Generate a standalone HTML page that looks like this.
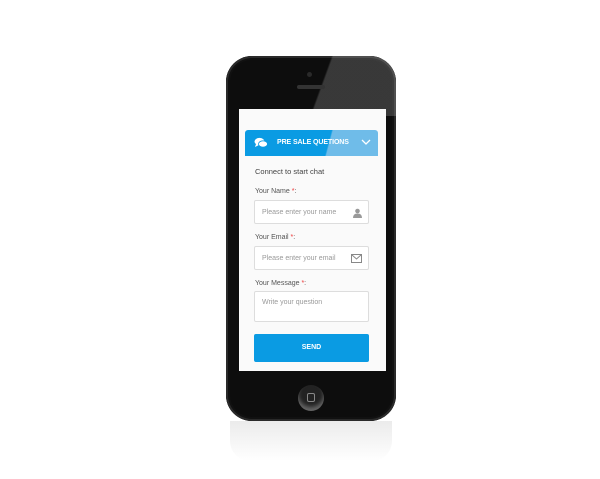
<!DOCTYPE html>
<html><head><style>
body{margin:0;width:600px;height:479px;background:#fff;position:relative;overflow:hidden;font-family:"Liberation Sans",sans-serif}
.phone{position:absolute;left:226px;top:56px;width:170px;height:365px;background:#0d0d0d;border-radius:26px;box-shadow:inset 0 0 0 2px #2a2a2a,inset 0 0 0 4px #111;overflow:hidden}
.shine{position:absolute;left:0;top:0;width:170px;height:60px;background:linear-gradient(110deg,transparent 55%,rgba(255,255,255,.18) 56%)}
.refl{position:absolute;left:230px;top:421px;width:162px;height:40px;background:linear-gradient(#e6e6e6,#fff);border-radius:0 0 20px 20px;opacity:.8}
.spk{position:absolute;left:297px;top:85px;width:28px;height:4px;background:#333;border-radius:3px}
.cam{position:absolute;left:307px;top:72px;width:5px;height:5px;background:#2a2a2a;border-radius:50%}
.screen{position:absolute;left:239px;top:109px;width:147px;height:262px;background:#fafafa}
.hdr{position:absolute;left:245px;top:130px;width:133px;height:26px;background:linear-gradient(105deg,#0a9be3 62%,#6fbce9 63%);border-radius:3px 3px 0 0}
.t{position:absolute;font-size:7px;color:#555}
.in{position:absolute;left:254px;width:115px;background:#fff;border:1px solid #ddd;border-radius:2px;box-sizing:border-box}
.ph{position:absolute;left:7px;font-size:7px;color:#999}
.btn{position:absolute;left:254px;top:334px;width:115px;height:28px;background:#0a9be3;border-radius:2px;color:#fff;font-size:7px;font-weight:bold;text-align:center;line-height:28px}
.home{position:absolute;left:298px;top:385px;width:26px;height:26px;border-radius:50%;background:#222;box-shadow:inset 0 -4px 4px #666}
.home i{position:absolute;left:9px;top:8px;width:6px;height:7px;border:1.5px solid #888;border-radius:2px}
r{color:#e33}
</style></head><body>
<div class="refl"></div>
<div class="phone"><div class="shine"></div></div>
<div class="cam"></div><div class="spk"></div>
<div class="screen"></div>
<div class="hdr"></div>
<svg style="position:absolute;left:254px;top:137px" width="14" height="12" viewBox="0 0 14 12"><ellipse cx="5.5" cy="4.5" rx="5" ry="3.6" fill="#fff"/><path d="M2 7 L1 10 L5 8z" fill="#fff"/><ellipse cx="9" cy="7" rx="4.5" ry="3.2" fill="#fff" stroke="#0a9be3" stroke-width=".8"/></svg>
<div style="position:absolute;left:277px;top:139px;color:#fff;font-size:7px;font-weight:bold;letter-spacing:-.1px">PRE SALE QUETIONS</div>
<svg style="position:absolute;left:361px;top:139px" width="10" height="7"><path d="M1 1 L5 5 L9 1" stroke="#fff" stroke-width="1.3" fill="none"/></svg>
<div class="t" style="left:255px;top:167px;font-size:7.5px;color:#444">Connect to start chat</div>
<div class="t" style="left:255px;top:188px">Your Name <r>*</r>:</div>
<div class="in" style="top:200px;height:24px"><span class="ph" style="top:8px">Please enter your name</span>
<svg style="position:absolute;right:6px;top:7px" width="9" height="10"><circle cx="4.5" cy="3" r="2.3" fill="#999"/><path d="M0 10 Q0 5.5 4.5 5.5 Q9 5.5 9 10z" fill="#999"/></svg></div>
<div class="t" style="left:255px;top:234px">Your Email <r>*</r>:</div>
<div class="in" style="top:246px;height:24px"><span class="ph" style="top:8px">Please enter your email</span>
<svg style="position:absolute;right:6px;top:7px" width="11" height="9"><rect x=".5" y=".5" width="10" height="8" fill="none" stroke="#888"/><path d="M.5 .5 L5.5 5 L10.5 .5" fill="none" stroke="#888"/></svg></div>
<div class="t" style="left:255px;top:280px">Your Message <r>*</r>:</div>
<div class="in" style="top:291px;height:31px"><span class="ph" style="top:7px">Write your question</span></div>
<div class="btn">SEND</div>
<div class="home"><i></i></div>
</body></html>
